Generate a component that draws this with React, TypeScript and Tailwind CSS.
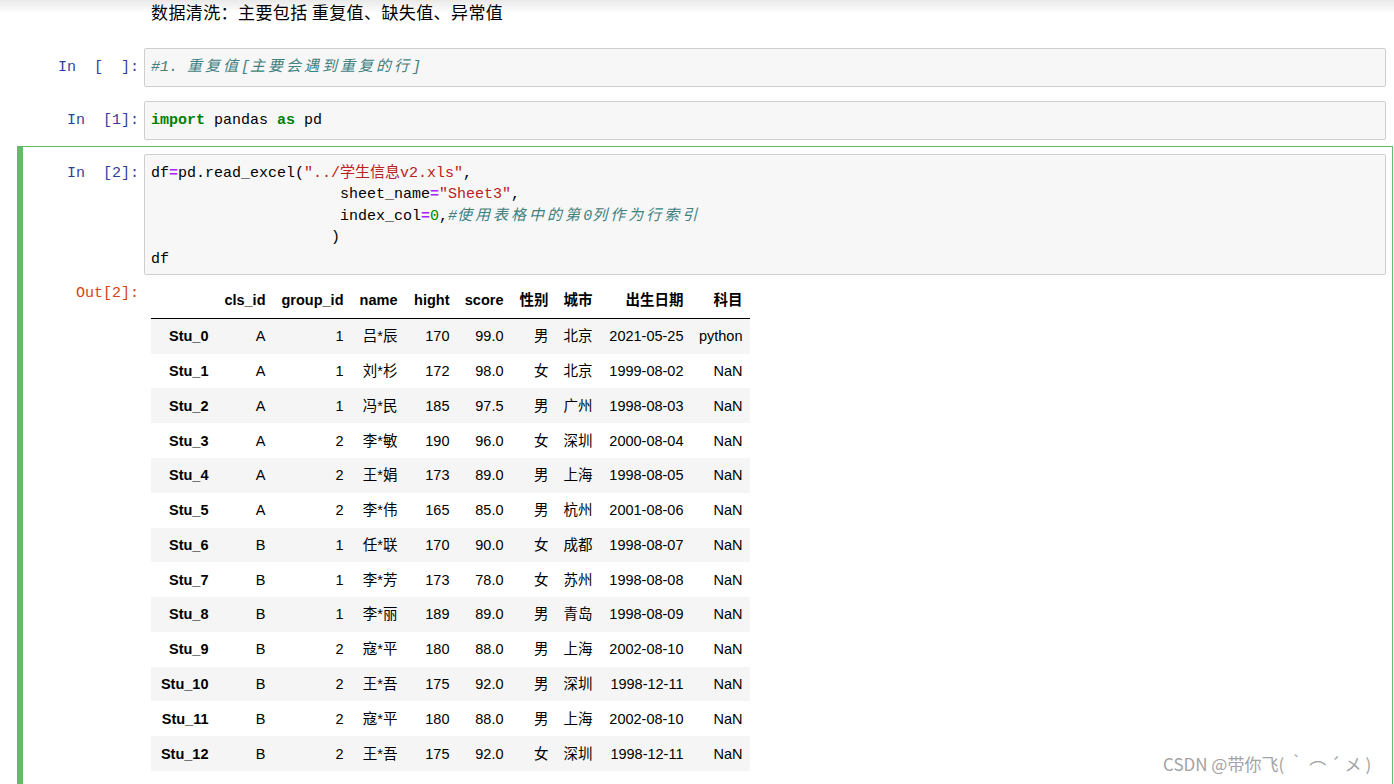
const MONO = "font-['Liberation_Mono','Noto_Sans_CJK_SC',monospace] text-[15px]";

const rows: string[][] = [
  ["Stu_0", "A", "1", "吕*辰", "170", "99.0", "男", "北京", "2021-05-25", "python"],
  ["Stu_1", "A", "1", "刘*杉", "172", "98.0", "女", "北京", "1999-08-02", "NaN"],
  ["Stu_2", "A", "1", "冯*民", "185", "97.5", "男", "广州", "1998-08-03", "NaN"],
  ["Stu_3", "A", "2", "李*敏", "190", "96.0", "女", "深圳", "2000-08-04", "NaN"],
  ["Stu_4", "A", "2", "王*娟", "173", "89.0", "男", "上海", "1998-08-05", "NaN"],
  ["Stu_5", "A", "2", "李*伟", "165", "85.0", "男", "杭州", "2001-08-06", "NaN"],
  ["Stu_6", "B", "1", "任*联", "170", "90.0", "女", "成都", "1998-08-07", "NaN"],
  ["Stu_7", "B", "1", "李*芳", "173", "78.0", "女", "苏州", "1998-08-08", "NaN"],
  ["Stu_8", "B", "1", "李*丽", "189", "89.0", "男", "青岛", "1998-08-09", "NaN"],
  ["Stu_9", "B", "2", "寇*平", "180", "88.0", "男", "上海", "2002-08-10", "NaN"],
  ["Stu_10", "B", "2", "王*吾", "175", "92.0", "男", "深圳", "1998-12-11", "NaN"],
  ["Stu_11", "B", "2", "寇*平", "180", "88.0", "男", "上海", "2002-08-10", "NaN"],
  ["Stu_12", "B", "2", "王*吾", "175", "92.0", "女", "深圳", "1998-12-11", "NaN"],
];

const headers = ["", "cls_id", "group_id", "name", "hight", "score", "性别", "城市", "出生日期", "科目"];
const widths = ["w-[65px]", "w-[57px]", "w-[78px]", "w-[54px]", "w-[52px]", "w-[54px]", "w-[45px]", "w-[44px]", "w-[91px]", "w-[59px]"];

// italic CJK in comments takes two monospace columns
function Wide({ children }: { children: string }) {
  return <span className="tracking-[3px]">{children}</span>;
}

function Op() {
  return <span className="font-bold text-[#AA22FF]">=</span>;
}

function Prompt({ label, out = false }: { label: string; out?: boolean }) {
  return (
    <div
      className={`w-[121px] shrink-0 whitespace-pre pr-[5px] text-right leading-[21px] ${MONO} ${
        out ? "text-[#D84315]" : "text-[#303F9F]"
      }`}
    >
      {label}
    </div>
  );
}

function Cell({ label, children }: { label: string; children: React.ReactNode }) {
  return (
    <div className="mr-[1px] ml-[17px] flex border border-l-[6px] border-transparent py-[5px] pr-[6px]">
      <div className="pt-[9px]">
        <Prompt label={label} />
      </div>
      <div className={`flex-1 rounded-[2px] border border-[#cfcfcf] bg-[#f7f7f7] px-[6px] py-[8px] leading-[21px] text-black ${MONO}`}>
        {children}
      </div>
    </div>
  );
}

export default function App() {
  return (
    <div className="relative min-h-[784px] bg-[linear-gradient(to_bottom,#e9e9e9_0px,#ffffff_13px)] font-['Liberation_Sans','Noto_Sans_CJK_SC',sans-serif]">
      <div className="h-[24px] pl-[151px] font-['Noto_Sans_CJK_SC',sans-serif] text-[17px] leading-[24px] tracking-[0.4px] text-black">
        数据清洗：主要包括 重复值、缺失值、异常值
      </div>

      <div className="mt-[18px]">
        <Cell label={"In\u00a0\u00a0[\u00a0\u00a0]:"}>
          <span className="italic text-[#408080]">
            #1. <Wide>重复值</Wide>[<Wide>主要会遇到重复的行</Wide>]
          </span>
        </Cell>
      </div>

      <div className="mt-[2px]">
        <Cell label={"In\u00a0\u00a0[1]:"}>
          <span className="font-bold text-[#008000]">import</span> pandas{" "}
          <span className="font-bold text-[#008000]">as</span> pd
        </Cell>
      </div>

      <div className="mr-[1px] ml-[17px] border border-l-[6px] border-[#66BB6A] pt-[7px] pr-[6px] pb-[60px]">
        <div className="flex">
          <div className="pt-[9px]">
            <Prompt label={"In\u00a0\u00a0[2]:"} />
          </div>
          <div className={`flex-1 whitespace-pre rounded-[2px] border border-[#cfcfcf] bg-[#f7f7f7] px-[6px] pt-[8px] pb-[4px] leading-[21.4px] text-black ${MONO}`}>
            <div>
              df<Op />pd.read_excel(
              <span className="text-[#BA2121]">"../学生信息v2.xls"</span>,
            </div>
            <div>
              {"                     "}sheet_name<Op />
              <span className="text-[#BA2121]">"Sheet3"</span>,
            </div>
            <div>
              {"                     "}index_col<Op />
              <span className="text-[#008800]">0</span>,
              <span className="italic text-[#408080]">
                #<Wide>使用表格中的第</Wide>0<Wide>列作为行索引</Wide>
              </span>
            </div>
            <div>{"                    "})</div>
            <div>df</div>
          </div>
        </div>

        <div className="mt-[8px] flex">
          <Prompt label="Out[2]:" out />
          <div className="pl-[7px]">
            <table className="w-[599px] table-fixed border-collapse whitespace-nowrap text-[14.5px] text-black">
              <thead>
                <tr className="border-b border-black">
                  {headers.map((h, i) => (
                    <th key={i} className={`${widths[i]} px-[7.5px] py-[8.4px] text-right align-middle font-bold leading-[18px]`}>
                      {h}
                    </th>
                  ))}
                </tr>
              </thead>
              <tbody>
                {rows.map((r, ri) => (
                  <tr key={r[0]} className={ri % 2 === 0 ? "bg-[#f5f5f5]" : "bg-white"}>
                    {r.map((v, ci) =>
                      ci === 0 ? (
                        <th key={ci} className="px-[7.5px] py-[8.4px] text-right align-middle font-bold leading-[18px]">
                          {v}
                        </th>
                      ) : (
                        <td key={ci} className="px-[7.5px] py-[8.4px] text-right align-middle leading-[18px]">
                          {v}
                        </td>
                      )
                    )}
                  </tr>
                ))}
              </tbody>
            </table>
          </div>
        </div>
      </div>

      <div className="pointer-events-none absolute top-[752px] left-[1163px] whitespace-nowrap font-['Noto_Sans_CJK_SC',sans-serif] text-[17px] leading-[24px] text-[#a3a3a3]">
        CSDN @带你飞
        <span className="tracking-[4px]">
          (｀<span className="inline-block translate-y-[5px]">⌒</span>´メ
        </span>
        )
      </div>
    </div>
  );
}
